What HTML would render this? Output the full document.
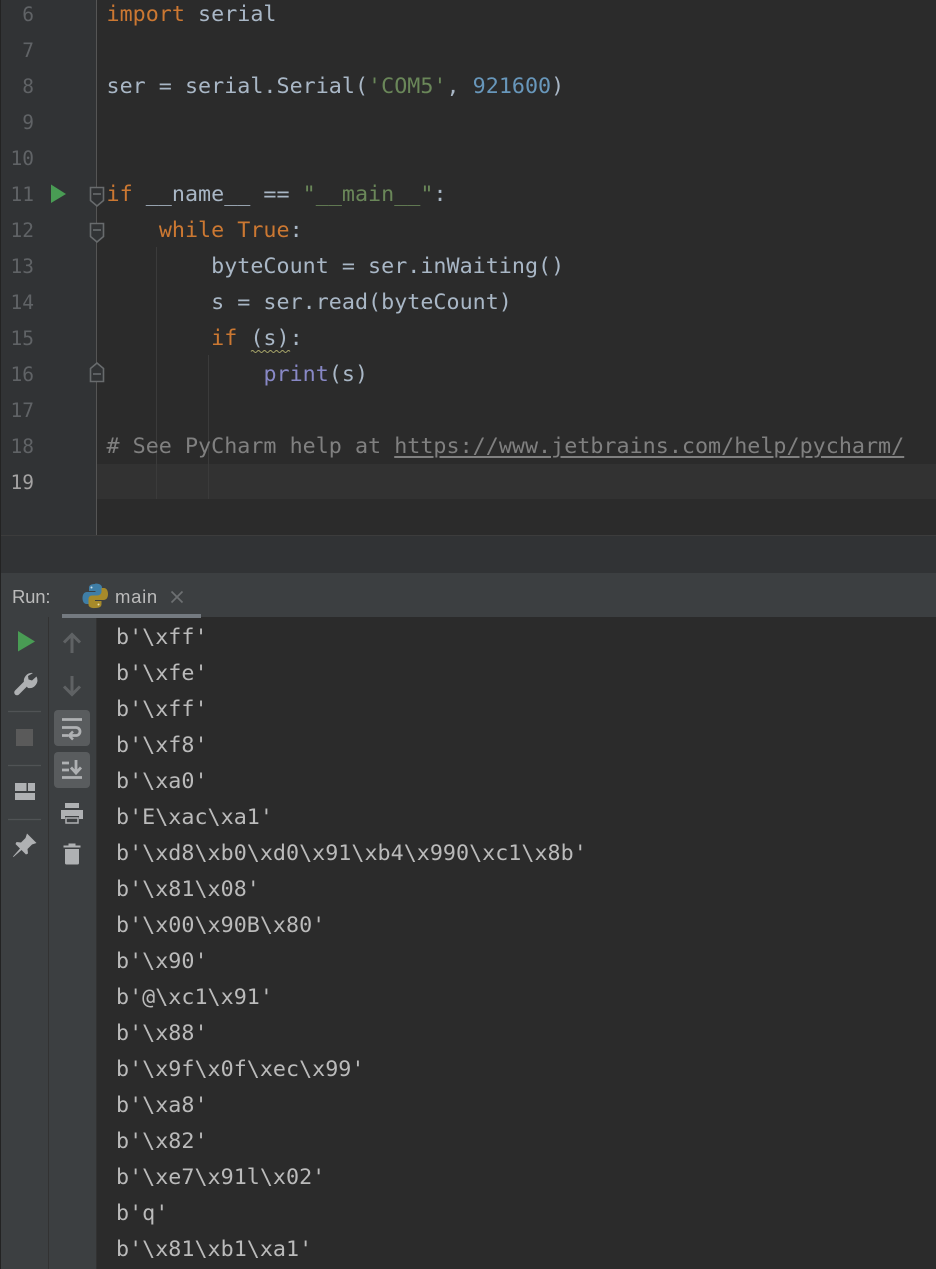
<!DOCTYPE html>
<html><head><meta charset="utf-8">
<style>
html,body{margin:0;padding:0;background:#2b2b2b}
#p{position:relative;width:936px;height:1269px;overflow:hidden;background:#2b2b2b;filter:blur(.3px)}
.a{position:absolute}
.l{position:absolute;left:0;margin-top:1px;white-space:pre;font:21.7px/36px "DejaVu Sans Mono","Liberation Mono",monospace;letter-spacing:.02px;color:#a9b7c6}
.o{color:#bbb;margin-left:-1px}
.n{position:absolute;width:34px;text-align:right;left:0;margin-top:1px;font:19.5px/36px "DejaVu Sans Mono",monospace;color:#606366}
.k{color:#cc7832}.s{color:#6a8759}.d{color:#6897bb}.c{color:#808080}.b{color:#8888c6}
svg{position:absolute;left:0;top:0}
</style></head><body><div id="p">
<div class="a" style="left:0;top:0;width:97px;height:535px;background:#313335"></div>
<div class="a" style="left:0;top:0;width:1px;height:1269px;background:#232323"></div>
<div class="a" style="left:97px;top:464px;width:839px;height:35px;background:#323232"></div>
<div class="a" style="left:1px;top:535px;width:935px;height:38px;background:#313335;border-top:1px solid #3c3c3c;box-sizing:border-box"></div>
<div class="a" style="left:1px;top:573px;width:935px;height:44px;background:#3c3f41"></div>
<div class="a" style="left:1px;top:617px;width:47px;height:652px;background:#3c3f41"></div>
<div class="a" style="left:48px;top:617px;width:1px;height:652px;background:#323232"></div>
<div class="a" style="left:49px;top:617px;width:47px;height:652px;background:#3c3f41"></div>
<div class="a" style="left:96px;top:617px;width:1px;height:652px;background:#323232"></div>
<div class="a" style="left:96px;top:0;width:1px;height:535px;background:#555"></div>
<div class="a" style="left:156px;top:247px;width:1px;height:252px;background:#3b3b3b"></div>
<div class="a" style="left:208px;top:355px;width:1px;height:144px;background:#3b3b3b"></div>

<div class="n" style="top:-4px">6</div><div class="n" style="top:32px">7</div><div class="n" style="top:68px">8</div><div class="n" style="top:104px">9</div><div class="n" style="top:140px">10</div><div class="n" style="top:176px">11</div><div class="n" style="top:212px">12</div><div class="n" style="top:248px">13</div><div class="n" style="top:284px">14</div><div class="n" style="top:320px">15</div><div class="n" style="top:356px">16</div><div class="n" style="top:392px">17</div><div class="n" style="top:428px">18</div><div class="n" style="top:464px;color:#a4a3a3">19</div>

<div class="l" style="left:106.5px;top:-4px"><span class="k">import</span> serial</div>
<div class="l" style="left:106.5px;top:68px">ser = serial.Serial(<span class="s">'COM5'</span>, <span class="d">921600</span>)</div>
<div class="l" style="left:106.5px;top:176px"><span class="k">if</span> __name__ == <span class="s">"__main__"</span>:</div>
<div class="l" style="left:106.5px;top:212px">    <span class="k">while True</span>:</div>
<div class="l" style="left:106.5px;top:248px">        byteCount = ser.inWaiting()</div>
<div class="l" style="left:106.5px;top:284px">        s = ser.read(byteCount)</div>
<div class="l" style="left:106.5px;top:320px">        <span class="k">if</span> (s):</div>
<div class="l" style="left:106.5px;top:356px">            <span class="b">print</span>(s)</div>
<div class="l" style="left:106.5px;top:428px"><span class="c"># See PyCharm help at <span style="text-decoration:underline;text-underline-offset:3px">https://www.jetbrains.com/help/pycharm/</span></span></div>

<svg width="936" height="1269" viewBox="0 0 936 1269" fill="none">
<path d="M51 184.500L66 194 51 203z" fill="#499c54"/>
<path d="M90.500 187.500h13v13l-6.500 5.500-6.500-5.500z" fill="#2f3133" stroke="#686b6d" stroke-width="1.600"/>
<path d="M93 194h8" stroke="#686b6d" stroke-width="1.600"/>
<path d="M90.500 223.500h13v13l-6.500 5.500-6.500-5.500z" fill="#313335" stroke="#686b6d" stroke-width="1.600"/>
<path d="M93 230h8" stroke="#686b6d" stroke-width="1.600"/>
<path d="M90.500 381.500h13v-13l-6.500-5.500-6.500 5.500z" fill="#313335" stroke="#686b6d" stroke-width="1.600"/>
<path d="M93 374h8" stroke="#686b6d" stroke-width="1.600"/>
<path d="M251 351.500q1.500-2 3-0t3 0 3 0 3 0 3 0 3 0 3 0 3 0 3 0 3 0 3 0 3 0 3 0" stroke="#a8a66a" stroke-width="1"/>
<path d="M8 711.500h33M8 765.500h33M8 819.500h33" stroke="#505355" stroke-width="1.300"/>

<!-- run -->
<path d="M18 631L35 641.500 18 651.500z" fill="#499c54"/>
<!-- wrench -->
<path d="M17 692.500L27.500 682" stroke="#afb1b3" stroke-width="5.500" stroke-linecap="round"/>
<path d="M33 673a8 8 0 0 0-8.500 11l3.500 4a8 8 0 0 0 8.500-11.500l-4.500 4-3.500-1-.5-3.500z" fill="#afb1b3"/>
<!-- stop -->
<rect x="16" y="729" width="17" height="17" fill="#5a5a5a"/>
<!-- layout -->
<path d="M15 783h11.500v8H15zM28 783h7v8h-7zM15 793h20v7H15z" fill="#afb1b3"/>
<!-- pin -->
<path d="M27 833.500l9.500 9.500-4.500 1.500-4.500 4.500.5 4.500-2 1-4.500-4.500-8 7-.5-.5 7-8-4.500-4.500 1-2 4.500.5 4.500-4.500z" fill="#afb1b3"/>
<!-- up / down -->
<path d="M72 653v-18M64 642.500l8-8 8 8" stroke="#5f6264" stroke-width="3"/>
<path d="M72 676v18M64 686.500l8 8 8-8" stroke="#5f6264" stroke-width="3"/>
<!-- toggled -->
<rect x="54" y="710" width="36" height="36" rx="4" fill="#595c5e"/>
<rect x="54" y="752" width="36" height="36" rx="4" fill="#595c5e"/>
<path d="M62 719.500h20M62 727.500h14a4 4 0 0 1 0 8h-6M62 735.500h6" stroke="#afb1b3" stroke-width="2.800"/>
<path d="M73 731.500l-4 4 4 4" stroke="#afb1b3" stroke-width="2.500"/>
<path d="M62 763h7M62 770h7M62 777.500h20M76 760v13M71 767.500l5 5.500 5-5.500" stroke="#afb1b3" stroke-width="2.800"/>
<!-- print -->
<path d="M65 803h14v5H65z" fill="#afb1b3"/>
<path d="M61 810h22v9h-4v-3H65v3h-4z" fill="#afb1b3"/>
<path d="M66 818h12v5H66z" stroke="#afb1b3" stroke-width="1.500"/>
<!-- trash -->
<path d="M64 846h16v1H64zM69 844h6v2h-6z" fill="#afb1b3" stroke="#afb1b3"/>
<path d="M65 849h14v14a1.500 1.500 0 0 1-1.500 1.500h-11A1.500 1.500 0 0 1 65 863z" fill="#afb1b3"/>
<!-- python -->
<path d="M95 584c-5 0-6 2-6 4v3h6.500v1h-8.500c-3 0-4.500 2.500-4.500 6s1.500 6 4 6h2.500v-3.500c0-2.500 2-4 4.500-4h5c2 0 3.500-1.500 3.500-3.500v-5.500c0-2-2-4-6.500-4z" fill="#3f7ea6"/>
<path d="M95.500 608c5 0 6-2 6-4v-3H95v-1h8.500c3 0 4.500-2.500 4.500-6s-1.500-6-4-6h-2.500v3.500c0 2.500-2 4-4.500 4h-5c-2 0-3.500 1.500-3.500 3.500v5.500c0 2 2 4 7 3.500z" fill="#a68a2a"/>
<circle cx="91.500" cy="587.500" r="1" fill="#cfe0ea"/><circle cx="98.500" cy="604.500" r="1" fill="#e8dca8"/>
<path d="M171.500 591.500l11 11M182.500 591.500l-11 11" stroke="#6d7072" stroke-width="1.700"/>
</svg>
<div class="a" style="left:62px;top:614px;width:139px;height:4px;background:#747a80"></div>
<div class="a" style="left:12px;top:585px;font:18.5px/24px 'Liberation Sans',sans-serif;color:#bbb;letter-spacing:-.2px">Run:</div>
<div class="a" style="left:115px;top:585px;font:18.5px/24px 'Liberation Sans',sans-serif;color:#bbb;letter-spacing:.7px">main</div>

<div class="l o" style="left:117px;top:619px">b'\xff'</div>
<div class="l o" style="left:117px;top:655px">b'\xfe'</div>
<div class="l o" style="left:117px;top:691px">b'\xff'</div>
<div class="l o" style="left:117px;top:727px">b'\xf8'</div>
<div class="l o" style="left:117px;top:763px">b'\xa0'</div>
<div class="l o" style="left:117px;top:799px">b'E\xac\xa1'</div>
<div class="l o" style="left:117px;top:835px">b'\xd8\xb0\xd0\x91\xb4\x990\xc1\x8b'</div>
<div class="l o" style="left:117px;top:871px">b'\x81\x08'</div>
<div class="l o" style="left:117px;top:907px">b'\x00\x90B\x80'</div>
<div class="l o" style="left:117px;top:943px">b'\x90'</div>
<div class="l o" style="left:117px;top:979px">b'@\xc1\x91'</div>
<div class="l o" style="left:117px;top:1015px">b'\x88'</div>
<div class="l o" style="left:117px;top:1051px">b'\x9f\x0f\xec\x99'</div>
<div class="l o" style="left:117px;top:1087px">b'\xa8'</div>
<div class="l o" style="left:117px;top:1123px">b'\x82'</div>
<div class="l o" style="left:117px;top:1159px">b'\xe7\x91l\x02'</div>
<div class="l o" style="left:117px;top:1195px">b'q'</div>
<div class="l o" style="left:117px;top:1231px">b'\x81\xb1\xa1'</div>
</div></body></html>
